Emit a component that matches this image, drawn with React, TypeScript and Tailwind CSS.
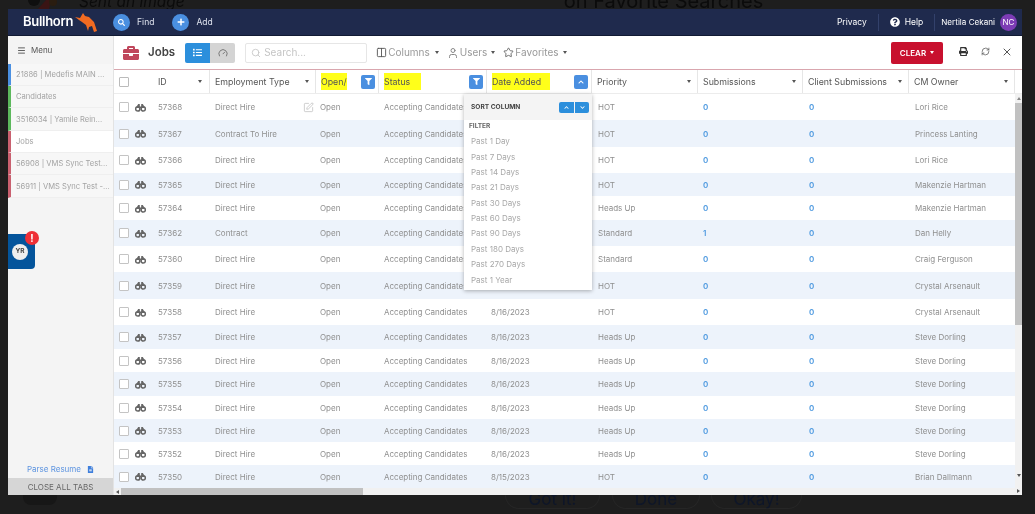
import React from "react";
import { FaPrint, FaQuestionCircle, FaSearch, FaPlus, FaList, FaFilter, FaChevronUp, FaChevronDown, FaFileAlt, FaBriefcase } from "react-icons/fa";
import { Menu, Search, Gauge, Star, User, Columns2, RefreshCw, X, SquarePen } from "lucide-react";

const rows = [
  ["57368","Direct Hire","Accepting Candidates","","HOT","0","Lori Rice","h-[26px]"],
  ["57367","Contract To Hire","Accepting Candidates","","HOT","0","Princess Lanting","h-[27px]"],
  ["57366","Direct Hire","Accepting Candidates","","HOT","0","Lori Rice","h-[26px]"],
  ["57365","Direct Hire","Accepting Candidates","","HOT","0","Makenzie Hartman","h-[23px]"],
  ["57364","Direct Hire","Accepting Candidates","","Heads Up","0","Makenzie Hartman","h-[24px]"],
  ["57362","Contract","Accepting Candidates","","Standard","1","Dan Helly","h-[26px]"],
  ["57360","Direct Hire","Accepting Candidates","","Standard","0","Craig Ferguson","h-[26px]"],
  ["57359","Direct Hire","Accepting Candidates","","HOT","0","Crystal Arsenault","h-[27px]"],
  ["57358","Direct Hire","Accepting Candidates","8/16/2023","HOT","0","Crystal Arsenault","h-[26px]"],
  ["57357","Direct Hire","Accepting Candidates","8/16/2023","Heads Up","0","Steve Dorling","h-[24px]"],
  ["57356","Direct Hire","Accepting Candidates","8/16/2023","Heads Up","0","Steve Dorling","h-[23px]"],
  ["57355","Direct Hire","Accepting Candidates","8/16/2023","Heads Up","0","Steve Dorling","h-[24px]"],
  ["57354","Direct Hire","Accepting Candidates","8/16/2023","Heads Up","0","Steve Dorling","h-[23px]"],
  ["57353","Direct Hire","Accepting Candidates","8/16/2023","Heads Up","0","Steve Dorling","h-[23px]"],
  ["57352","Direct Hire","Accepting Candidates","8/16/2023","Heads Up","0","Steve Dorling","h-[23px]"],
  ["57350","Direct Hire","Accepting Candidates","8/15/2023","HOT","0","Brian Dallmann","h-[23px]"],
];

const tabs = [
  ["21886 | Medefis MAIN ...", "border-[#4a90e2]", "bg-[#f7f7f7]", "h-[22px]"],
  ["Candidates", "border-[#5cb85c]", "bg-[#f7f7f7]", "h-[22px]"],
  ["3516034 | Yamile Rein...", "border-[#5cb85c]", "bg-[#f7f7f7]", "h-[23px]"],
  ["Jobs", "border-[#c9606f]", "bg-white", "h-[22px]"],
  ["56908 | VMS Sync Test...", "border-[#c9606f]", "bg-[#f7f7f7]", "h-[22px]"],
  ["56911 | VMS Sync Test -...", "border-[#c9606f]", "bg-[#f7f7f7]", "h-[23px]"],
];

const filters = ["Past 1 Day","Past 7 Days","Past 14 Days","Past 21 Days","Past 30 Days","Past 60 Days","Past 90 Days","Past 180 Days","Past 270 Days","Past 1 Year"];

const cols = "grid grid-cols-[96px_106px_63px_108px_105px_106px_105px_106px_106px_1fr]";

function Caret() {
  return <span className="block w-0 h-0 border-x-[2.5px] border-x-transparent border-t-[3px] border-t-[#555]" />;
}

function Bull() {
  return (
    <svg width="22" height="21" viewBox="0 0 22 21" className="ml-[2px]">
      <path d="M0 5 L5 6 L8 1 L10 4 L14 5 L19 10 L22 19 L19 20 L17 14 L14 15 L13 19 L11 13 L7 10 L4 8 Z" fill="#f26b21" />
    </svg>
  );
}

function Binoculars() {
  return (
    <svg width="11" height="9" viewBox="0 0 12 9" className="ml-[6px] shrink-0">
      <circle cx="3" cy="6" r="2.3" fill="none" stroke="#666" strokeWidth="1.7" />
      <circle cx="9" cy="6" r="2.3" fill="none" stroke="#666" strokeWidth="1.7" />
      <path d="M0.8 5 L3.5 0.6 L5.2 0.6 L5.3 3.5 L6.7 3.5 L6.8 0.6 L8.5 0.6 L11.2 5 Z" fill="#666" />
    </svg>
  );
}

function HeaderCell({ label, markClass, filter, up }: { label: string; markClass?: string; filter?: boolean; up?: boolean }) {
  return (
    <div className="flex items-center justify-between border-r border-[#e6e6e6] pl-[5px] pr-[3px] text-[8.8px] text-[#555] min-w-0">
      <span className={`whitespace-nowrap ${markClass ?? ""}`}>{label}</span>
      {filter ? (
        <span className="w-[14px] h-[14px] rounded-[2px] bg-[#4a8fe0] flex items-center justify-center text-white"><FaFilter size={7} /></span>
      ) : up ? (
        <span className="w-[14px] h-[14px] rounded-[2px] bg-[#4a8fe0] flex items-center justify-center text-white"><FaChevronUp size={6} /></span>
      ) : (
        <span className="mr-[3px]"><Caret /></span>
      )}
    </div>
  );
}

export default function App() {
  return (
    <div className="w-[1035px] h-[514px] bg-[#1e1e1e] overflow-hidden flex flex-col blur-[0.55px] font-['Inter','Liberation_Sans',sans-serif]">
      <div className="h-[9px] shrink-0 overflow-hidden flex text-[#0b0b0b] leading-[10px]">
        <svg width="30" height="9" viewBox="0 0 30 9" className="ml-[28px] shrink-0">
          <circle cx="6" cy="0" r="6" fill="#0f0f0f" />
          <path d="M10 9 L18 0 L23 0 L21 9 Z" fill="#3a1414" />
          <circle cx="25" cy="2" r="4" fill="#2a1d10" />
        </svg>
        <span className="ml-[21px] italic text-[15.5px] -mt-[3px]">Sent an image</span>
        <span className="ml-[379px] text-[20px] -mt-[4px]">on Favorite Searches</span>
      </div>
      <div className="mx-[8px] w-[1014px] h-[486px] bg-white flex flex-col overflow-hidden shrink-0">
        {/* top nav */}
        <div className="h-[27px] shrink-0 bg-[#1f2a4d] border-b border-[#111a33] flex items-center text-white text-[8.5px]">
          <span className="ml-[15px] text-[13px] font-semibold tracking-[-0.3px]">Bullhorn</span>
          <Bull />
          <span className="ml-[16px] w-[17px] h-[17px] rounded-full bg-[#4a8fe0] flex items-center justify-center"><FaSearch size={7} /></span>
          <span className="ml-[7px] text-[#dfe3ee]">Find</span>
          <span className="ml-[18px] w-[17px] h-[17px] rounded-full bg-[#4a8fe0] flex items-center justify-center"><FaPlus size={8} /></span>
          <span className="ml-[7px] text-[#dfe3ee]">Add</span>
          <span className="ml-auto">Privacy</span>
          <span className="ml-[11px] h-[17px] w-px bg-[#33416b]" />
          <FaQuestionCircle size={10} className="ml-[11px]" />
          <span className="ml-[5px]">Help</span>
          <span className="ml-[11px] h-[17px] w-px bg-[#33416b]" />
          <span className="ml-[6px] text-[8.1px] whitespace-nowrap">Nertila Cekani</span>
          <span className="ml-[5px] mr-[5px] w-[17px] h-[17px] rounded-full bg-[#7d3cb5] flex items-center justify-center text-[8px]">NC</span>
        </div>
        <div className="flex flex-1 min-h-0">
          {/* sidebar */}
          <aside className="w-[106px] shrink-0 bg-[#f4f4f4] border-r border-[#e3e3e3] flex flex-col">
            <div className="h-[28px] shrink-0 flex items-center pl-[9px] gap-[5px] text-[8px] text-[#555]">
              <Menu size={9} strokeWidth={2.5} />
              <span>Menu</span>
            </div>
            {tabs.map(([t, b, bg, h]) => (
              <div key={t} className={`${h} ${bg} shrink-0 border-l-[3px] ${b} border-b border-b-[#efefef] pl-[5px] pt-[1px] flex items-center text-[7.6px] text-[#a3a3a3] whitespace-nowrap overflow-hidden`}>{t}</div>
            ))}
            <div className="flex-1 flex flex-col justify-end">
              <div className="relative w-[27px] h-[35px] mb-[193px] pr-[3px] bg-[#04549b] rounded-br-[4px] flex items-center justify-center">
                <span className="w-[16px] h-[16px] rounded-full bg-[#eee] text-[#444] text-[6.5px] font-bold flex items-center justify-center">YR</span>
                <span className="absolute -top-[3px] -right-[4px] w-[14px] h-[14px] rounded-full bg-[#ee2f36] text-white text-[10px] font-bold flex items-center justify-center">!</span>
              </div>
              <div className="h-[14px] flex items-center justify-center gap-[6px] text-[8px] text-[#5d94e0] mb-[2px]">
                <span>Parse Resume</span>
                <FaFileAlt size={7} className="text-[#3f7fdc]" />
              </div>
              <div className="h-[17px] bg-[#d6d6d6] flex items-center justify-center text-[8px] text-[#666]">CLOSE ALL TABS</div>
            </div>
          </aside>
          {/* main */}
          <main className="flex-1 min-w-0 flex flex-col relative">
            <div className="h-[34px] shrink-0 flex items-center border-b border-[#d9a6ae] text-[10px] text-[#999]">
              <FaBriefcase size={16} className="ml-[9px] text-[#c0475c]" />
              <span className="ml-[9px] text-[11.5px] font-semibold text-[#444]">Jobs</span>
              <span className="ml-[10px] w-[25px] h-[20px] bg-[#2c8fdc] rounded-l-[2px] flex items-center justify-center text-white"><FaList size={9} /></span>
              <span className="w-[25px] h-[20px] bg-[#d4d4d4] rounded-r-[2px] flex items-center justify-center text-[#666]"><Gauge size={10} /></span>
              <div className="ml-[10px] w-[122px] h-[20px] border border-[#e6e6e6] rounded-[2px] flex items-center pl-[5px] gap-[3px] text-[#c4c4c4]">
                <Search size={10} />
                <span>Search...</span>
              </div>
              <Columns2 size={11} className="ml-[9px] text-[#555]" />
              <span className="ml-[1px]">Columns</span>
              <span className="ml-[5px]"><Caret /></span>
              <User size={12} className="ml-[8px] text-[#888]" />
              <span className="ml-[1px]">Users</span>
              <span className="ml-[4px]"><Caret /></span>
              <Star size={11} className="ml-[8px] text-[#666]" />
              <span className="ml-[1px]">Favorites</span>
              <span className="ml-[4px]"><Caret /></span>
              <span className="ml-auto w-[52px] h-[22px] bg-[#c8102e] rounded-[2px] flex items-center justify-center gap-[4px] text-white font-semibold text-[8px]">CLEAR <span className="block w-0 h-0 border-x-[2.5px] border-x-transparent border-t-[3px] border-t-white" /></span>
              <FaPrint size={9} className="ml-[16px] mb-[2px] text-[#333]" />
              <RefreshCw size={9} className="ml-[13px] mb-[2px] text-[#555]" />
              <X size={12} className="ml-[11px] mb-[2px] mr-[9px] text-[#555]" />
            </div>
            <div className={`${cols} h-[24px] shrink-0 border-b border-[#ececec]`}>
              <div className="flex items-center border-r border-[#e6e6e6] text-[8.8px] text-[#555] pl-[5px]">
                <span className="w-[10px] h-[10px] border border-[#bbb] rounded-[1px]" />
                <span className="ml-[29px]">ID</span>
                <span className="ml-auto mr-[7px]"><Caret /></span>
              </div>
              <HeaderCell label="Employment Type" />
              <HeaderCell label="Open/" markClass="bg-[#ffff1a] py-[2px]" filter />
              <HeaderCell label="Status" markClass="bg-[#ffff1a] py-[2px] pr-[11px]" filter />
              <HeaderCell label="Date Added" markClass="bg-[#ffff1a] py-[2px] pr-[9px]" up />
              <HeaderCell label="Priority" />
              <HeaderCell label="Submissions" />
              <HeaderCell label="Client Submissions" />
              <HeaderCell label="CM Owner" />
              <div />
            </div>
            <div className="flex-1 min-h-0 flex flex-col">
              {rows.map(([id, type, status, date, pri, sub, owner, h], i) => (
                <div key={id} className={`${cols} ${h} shrink-0 items-center text-[8px] text-[#8f8f8f] whitespace-nowrap ${i % 2 ? "bg-[#edf3fb]" : "bg-white"}`}>
                  <div className="flex items-center pl-[5px]">
                    <span className="w-[10px] h-[10px] border border-[#c4c4c4] rounded-[1px] bg-white" />
                    <Binoculars />
                    <span className="ml-[12px]">{id}</span>
                  </div>
                  <div className="pl-[5px] flex items-center justify-between pr-[2px]">
                    <span>{type}</span>
                    {i === 0 && <SquarePen size={11} strokeWidth={1.25} className="text-[#aaa]" />}
                  </div>
                  <div className="pl-[4px]">Open</div>
                  <div className="pl-[5px]">{status}</div>
                  <div className="pl-[4px]">{date}</div>
                  <div className="pl-[6px]">{pri}</div>
                  <div className="pl-[5px] text-[#4f9ae0] font-semibold">{sub}</div>
                  <div className="pl-[6px] text-[#4f9ae0] font-semibold">0</div>
                  <div className="pl-[6px]">{owner}</div>
                  <div />
                </div>
              ))}
              <div className="h-[7px] shrink-0 bg-[#f1f1f1] flex items-center">
                <span className="ml-[2px] block w-0 h-0 border-y-[2px] border-y-transparent border-r-[3px] border-r-[#555]" />
                <span className="ml-[2px] w-[242px] h-[7px] bg-[#c1c1c1]" />
              </div>
            </div>
            {/* vertical scrollbar */}
            <div className="absolute right-0 top-[58px] bottom-0 w-[7px] bg-[#f1f1f1] flex flex-col items-center">
              <span className="mt-[3px] block w-0 h-0 border-x-[2px] border-x-transparent border-b-[3px] border-b-[#888]" />
              <div className="mt-[3px] w-[7px] h-[222px] bg-[#c1c1c1]" />
              <span className="mt-auto mb-[12px] block w-0 h-0 border-x-[2px] border-x-transparent border-t-[3px] border-t-[#555]" />
              <span className="mb-[2px] block w-0 h-0 border-y-[2px] border-y-transparent border-l-[3px] border-l-[#555]" />
            </div>
            {/* date dropdown */}
            <div className="absolute left-[350px] top-[58px] w-[128px] h-[196px] bg-white shadow-[0_1px_4px_rgba(0,0,0,0.3)] flex flex-col text-[8px] text-[#a8a8a8]">
              <div className="h-[26px] shrink-0 bg-[#f4f4f4] flex items-center pl-[7px] pr-[3px] justify-between">
                <span className="font-bold text-[6.6px] text-[#444] pt-[1px]">SORT COLUMN</span>
                <span className="flex gap-px">
                  <span className="w-[15px] h-[11px] bg-[#2c8fdc] rounded-l-[2px] flex items-center justify-center text-white"><FaChevronUp size={5} /></span>
                  <span className="w-[14px] h-[11px] bg-[#2c8fdc] rounded-r-[2px] flex items-center justify-center text-white"><FaChevronDown size={5} /></span>
                </span>
              </div>
              <span className="pl-[5px] mt-[2px] font-bold text-[6.5px] text-[#666]">FILTER</span>
              <div className="flex flex-col mt-[2px]">
                {filters.map((f) => (
                  <span key={f} className="h-[15.35px] pl-[7px] flex items-center">{f}</span>
                ))}
              </div>
            </div>
          </main>
        </div>
      </div>
      <div className="flex-1 overflow-hidden flex items-start text-[#0e1629] text-[17px] leading-[12px]">
        <span className="ml-[23px] w-[34px] h-[10px] bg-[#171717] rounded-b-[8px]" />
        <span className="ml-[448px] w-[95px] h-[14px] border-x border-b border-[#262626] rounded-b-[14px] flex justify-center"><span className="-mt-[2px]">Got it!</span></span>
        <span className="ml-[12px] w-[88px] h-[14px] border-x border-b border-[#262626] rounded-b-[14px] flex justify-center"><span className="-mt-[2px]">Done</span></span>
        <span className="ml-[11px] w-[91px] h-[14px] border-x border-b border-[#262626] rounded-b-[14px] flex justify-center"><span className="-mt-[2px]">Okay!</span></span>
      </div>
    </div>
  );
}
